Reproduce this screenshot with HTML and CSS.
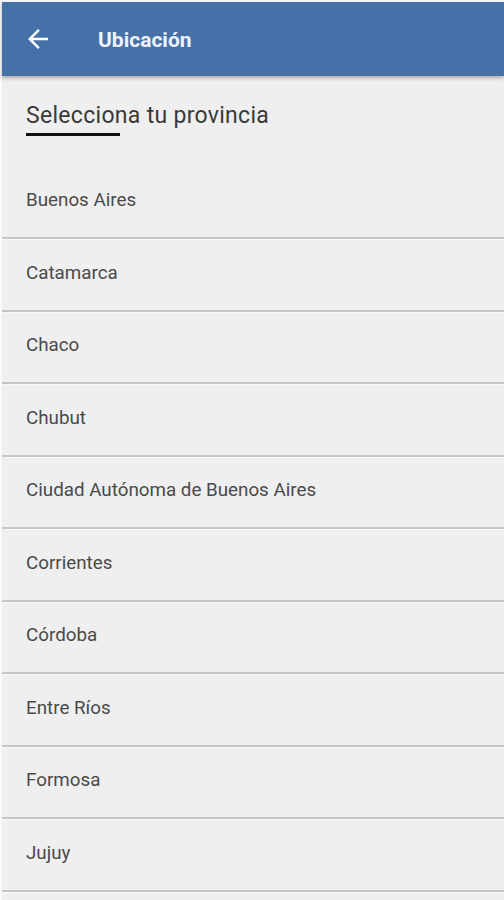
FILE: index.html
```html
<!DOCTYPE html>
<html lang="es">
  <head>
    <meta charset="utf-8">
    <title>Ubicación</title>
    <link rel="stylesheet" href="styles.css">
  </head>
  <body>
    <div class="screen">
      <div class="toolbar">
        <svg class="back" width="24" height="24" viewBox="0 0 24 24">
          <path d="M20 11H7.83l5.59-5.59L12 4l-8 8 8 8 1.41-1.41L7.83 13H20v-2z" fill="#fff"/>
        </svg>
        <span class="title">Ubicación</span>
      </div>
      <div class="heading">
        <span>Selecciona tu provincia</span>
        <div class="underline"></div>
      </div>
      <ul class="list">
        <li>Buenos Aires</li>
        <li>Catamarca</li>
        <li>Chaco</li>
        <li>Chubut</li>
        <li>Ciudad Autónoma de Buenos Aires</li>
        <li>Corrientes</li>
        <li>Córdoba</li>
        <li>Entre Ríos</li>
        <li>Formosa</li>
        <li>Jujuy</li>
      </ul>
    </div>
  </body>
</html>
```

FILE: styles.css
```css
html, body {
  margin: 0;
  padding: 0;
  height: 100%;
  overflow: hidden;
  background: #fafafa;
  font-family: Roboto, "Noto Sans", sans-serif;
}
.screen {
  margin: 2px 0 0 2px;
  height: 898px;
  background: #efefef;
}
.toolbar {
  height: 74px;
  background: #4671a8;
  display: flex;
  align-items: center;
  box-shadow: 0 2px 4px rgba(0, 0, 0, 0.3);
  position: relative;
}
.back {
  margin-left: 21px;
  width: 30px;
  height: 30px;
}
.title {
  margin-left: 45px;
  padding-top: 2px;
  color: #eef2f8;
  font-size: 21px;
  font-weight: 700;
}
.heading {
  padding: 26px 0 0 24px;
  height: 90.5px;
  box-sizing: border-box;
  color: #3a3a3a;
  font-size: 23px;
  line-height: 28px;
  letter-spacing: 0.3px;
}
.underline {
  width: 94px;
  height: 3px;
  background: #111;
  margin-top: 3px;
}
.list {
  list-style: none;
  margin: 0;
  padding: 0;
}
.list li {
  height: 72.5px;
  display: flex;
  align-items: center;
  padding-left: 24px;
  padding-bottom: 3.5px;
  box-sizing: border-box;
  font-size: 18.8px;
  color: #4a4a4a;
  border-bottom: 2px solid #c6c6c6;
  box-shadow: 0 1px 0 #f8f8f8;
}
```
